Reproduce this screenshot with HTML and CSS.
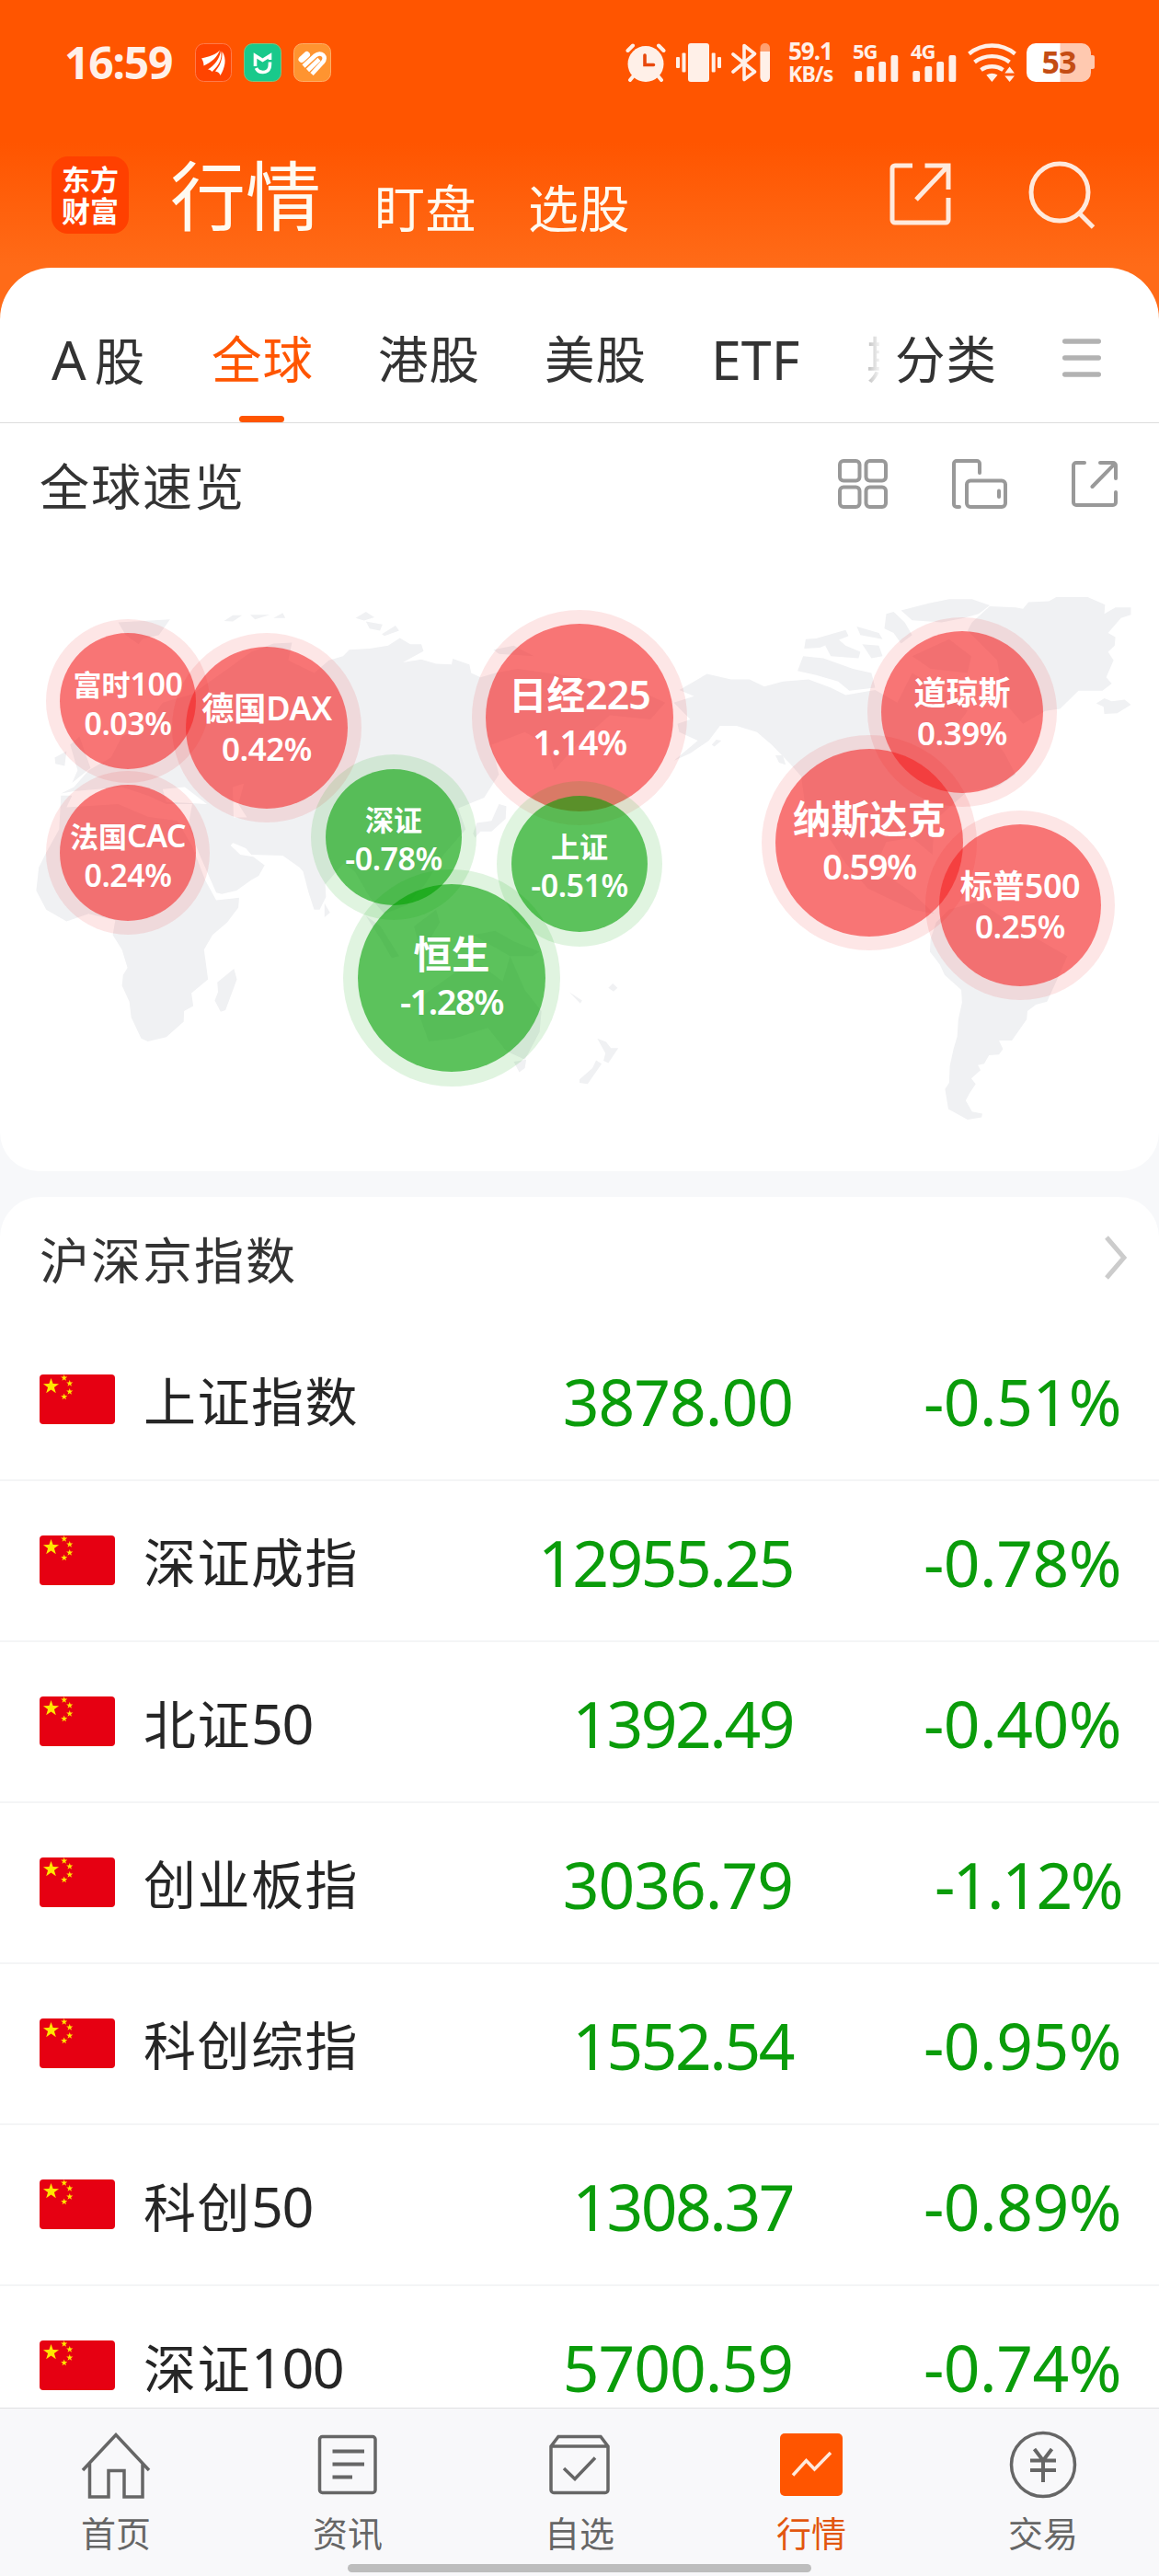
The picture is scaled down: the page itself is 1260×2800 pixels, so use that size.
FILE: index.html
```
<!DOCTYPE html>
<html lang="zh-CN">
<head>
	<meta charset="UTF-8">
	<meta name="viewport" content="width=device-width, initial-scale=1.0">
	<title>行情 - 全球</title>
	<link rel="stylesheet" href="styles.css">
</head>
<body>
	<svg class="defs" width="0" height="0">
		<symbol id="star" viewBox="-10 -10 20 20">
			<path d="M0-10 2.4-3.2 9.5-3.1 3.8 1.2 5.9 8.1 0 4-5.9 8.1-3.8 1.2-9.5-3.1-2.4-3.2z"/>
		</symbol>
		<symbol id="flag" viewBox="0 0 82 54">
			<rect width="82" height="54" rx="4" fill="#e60012"/>
			<g fill="#ffe600">
				<use href="#star" x="3.500" y="4" width="18" height="18"/>
				<use href="#star" x="23" y="0" width="7.500" height="7.500"/>
				<use href="#star" x="29" y="6" width="7.500" height="7.500"/>
				<use href="#star" x="29" y="15" width="7.500" height="7.500"/>
				<use href="#star" x="23" y="20.500" width="7.500" height="7.500"/>
			</g>
		</symbol>
	</svg>

	<header class="header">
		<div class="status-bar">
			<span class="clock">16:59</span>
			<div class="app-icons">
				<svg width="40" height="42" viewBox="0 0 40 42">
					<rect x=".5" y=".5" width="39" height="41" rx="9" fill="#ff4400" stroke="#ff7a4a"/>
					<g fill="#fff">
						<path d="M7 16.500C15 14.500 22 13 27 7.500 24 15 19 20 9.500 24.500 9.500 21 8.500 18.500 7 16.500z"/>
						<path d="M14 28.500C21 24 27 17 28 8 30 17 26 24 18.500 31 17.500 29.500 16 28.500 14 28.500z"/>
						<path d="M22 30.500C27 25 30 18 29.500 9 35 17 32.500 27 27.500 35 26.500 32 24.500 31 22 30.500z"/>
					</g>
				</svg>
				<svg width="41" height="42" viewBox="0 0 41 42">
					<rect x=".5" y=".5" width="40" height="41" rx="9" fill="#19c98b" stroke="#7fc27a"/>
					<g fill="none" stroke="#fff" stroke-width="3.600">
						<path d="M12.500 25V13.500L20.500 18.500 28.500 13.500V18"/>
						<path d="M13.500 27C16 33 26 33 28 26.500 28.500 24 28.500 22 28.500 20.500"/>
					</g>
				</svg>
				<svg width="41" height="42" viewBox="0 0 41 42">
					<rect x=".5" y=".5" width="40" height="41" rx="9" fill="#ff9430" stroke="#ffad66"/>
					<g fill="none" stroke="#fff" stroke-width="4.600">
						<path d="M9 17.500 14.500 12.500" stroke-width="7" stroke-linecap="round"/>
						<path d="M11 25 23.500 13.500C30 8 37.500 15 31.500 21L20 33.500"/>
						<path d="M15.500 29.500 28 17.500"/>
					</g>
				</svg>
			</div>
			<div class="status-icons">
				<svg width="44" height="42" viewBox="0 0 44 42" class="mr11">
					<g stroke="#fff0e8" stroke-width="4" stroke-linecap="round">
						<path d="M2.500 8 8 2.500M41.500 8 36 2.500M10 34 5 40M34 34 39 40"/>
					</g>
					<circle cx="22" cy="22.500" r="19.500" fill="#fff0e8"/>
					<path d="M21 13V23.500H30.500" fill="none" stroke="#e8480c" stroke-width="3.600" stroke-linecap="round"/>
				</svg>
				<svg width="49" height="42" viewBox="0 0 49 42" fill="#fff0e8" class="mr11">
					<rect x="13" width="23" height="42" rx="3"/>
					<rect x="6.500" y="10.500" width="4" height="21" rx="1"/>
					<rect y="15" width="4" height="12" rx="1"/>
					<rect x="38.700" y="10.500" width="4" height="21" rx="1"/>
					<rect x="45" y="15" width="4" height="12" rx="1"/>
				</svg>
				<svg width="42" height="42" viewBox="0 0 42 42" class="mr20">
					<path d="M2 12 25.500 31 14 39.500V2.500L25.500 11.500 2 31" fill="none" stroke="#fff0e8" stroke-width="3.600" stroke-linecap="round" stroke-linejoin="round"/>
					<rect x="31.500" width="10.500" height="42" rx="5" fill="#ffa070"/>
					<path d="M31.500 9H42V37A5 5 0 0 1 31.500 37z" fill="#fff0e8"/>
				</svg>
				<div class="net-speed"><span>59.1</span><span class="unit">KB/s</span></div>
				<svg width="50" height="42" viewBox="0 0 50 42" class="signal mr13">
					<text x="0" y="17">5G</text>
					<rect x="2.300" y="30" width="7.800" height="12" rx="2"/>
					<rect x="15.400" y="25" width="7.800" height="17" rx="2"/>
					<rect x="28.300" y="20" width="7.800" height="22" rx="2"/>
					<rect x="41.500" y="13" width="7.800" height="29" rx="2"/>
				</svg>
				<svg width="50" height="42" viewBox="0 0 50 42" class="signal mr12">
					<text x="0" y="17">4G</text>
					<rect x="2.300" y="30" width="7.800" height="12" rx="2"/>
					<rect x="15.400" y="25" width="7.800" height="17" rx="2"/>
					<rect x="28.300" y="20" width="7.800" height="22" rx="2"/>
					<rect x="41.500" y="13" width="7.800" height="29" rx="2"/>
				</svg>
				<svg width="53" height="42" viewBox="0 0 53 42" class="mr11">
					<g fill="none" stroke="#fff0e8" stroke-width="4.400">
						<path d="M1.500 11.500C16-.5 37-.5 51.500 11.500M7.500 20.500C18.500 12 34.500 12 45.500 20.500M14.500 29C21.500 24 31.500 24 38.500 29"/>
					</g>
					<path d="M20.300 34.500Q26.400 31 32.500 34.500L26.400 42zM40.300 32.500 45.600 25.500 50.900 32.500zM40.300 35.500H50.900L45.600 42z" fill="#fff0e8"/>
				</svg>
				<svg width="74" height="42" viewBox="0 0 74 42" class="battery">
					<rect x="60" y="13" width="14" height="15" rx="2" fill="#ffc9b0"/>
					<path d="M36 0H60A10 10 0 0 1 70 10V32A10 10 0 0 1 60 42H36z" fill="#ffc9b0"/>
					<path d="M36.500 0H10A10 10 0 0 0 0 10V32A10 10 0 0 0 10 42H36.500z" fill="#fff"/>
					<text x="35" y="33" text-anchor="middle">53</text>
				</svg>
			</div>
		</div>

		<div class="nav">
			<div class="logo"><span>东方</span><span>财富</span></div>
			<h1>行情</h1>
			<a class="nav-link">盯盘</a>
			<a class="nav-link">选股</a>
			<div class="nav-icons">
				<svg width="68" height="68" viewBox="0 0 68 68" fill="none" stroke="#ffe9dc" stroke-width="5">
					<path d="M25 3H6A3 3 0 0 0 3 6V62A3 3 0 0 0 6 65H61A3 3 0 0 0 64 62V38"/>
					<path d="M38.500 3H64V29M63 4 29 40"/>
				</svg>
				<svg class="search" width="74" height="74" viewBox="0 0 74 74" fill="none" stroke="#ffe9dc" stroke-width="5">
					<circle cx="34" cy="34" r="31"/>
					<path d="M55 56.500 70.500 72"/>
				</svg>
			</div>
		</div>
	</header>

	<main class="content">
		<section class="card overview">
			<div class="tabs">
				<a class="tab"><span class="en">A</span> 股</a>
				<a class="tab active">全球</a>
				<a class="tab">港股</a>
				<a class="tab">美股</a>
				<a class="tab etf"><span class="en">ETF</span></a>
				<a class="tab cut">期</a>
				<a class="tab">分类</a>
				<svg class="menu" width="42" height="44" viewBox="0 0 42 44" stroke="#b2b2b2" stroke-width="5.400" stroke-linecap="round">
					<path d="M2.700 4H39.300M2.700 22H39.300M2.700 40H39.300"/>
				</svg>
			</div>

			<div class="section-title">
				<h2>全球速览</h2>
				<div class="tools">
					<svg width="54" height="54" viewBox="0 0 54 54" fill="none" stroke="#999" stroke-width="4">
						<rect x="2" y="2" width="21.500" height="21.500" rx="4"/>
						<rect x="30.500" y="2" width="21.500" height="21.500" rx="4"/>
						<rect x="2" y="30.500" width="21.500" height="21.500" rx="4"/>
						<rect x="30.500" y="30.500" width="21.500" height="21.500" rx="4"/>
					</svg>
					<svg width="60" height="54" viewBox="0 0 60 54" fill="none" stroke="#999" stroke-width="4" stroke-linecap="round">
						<path d="M8 52H5A3 3 0 0 1 2 49V5A3 3 0 0 1 5 2H27A3 3 0 0 1 30 5V15"/>
						<rect x="16" y="23.500" width="42" height="28.500" rx="4"/>
						<path d="M51 34.500V41"/>
					</svg>
					<svg width="50" height="52" viewBox="0 0 50 52" fill="none" stroke="#999" stroke-width="4" stroke-linecap="round" stroke-linejoin="round">
						<path d="M14 3H5A3 3 0 0 0 2 6V46A3 3 0 0 0 5 49H45A3 3 0 0 0 48 46V35"/>
						<path d="M31 3H45A3 3 0 0 1 48 6V20M47 4 22.500 29"/>
					</svg>
				</div>
			</div>

			<div class="map">
				<svg class="world" viewBox="0 0 1260 682" fill="#f0f1f3">
					<g transform="translate(0 -10) scale(.4018 .4592)">
						<path d="M928 290 945 275 1000 272 1050 265 1082 247 1110 262 1140 262 1146 278 1090 305 1140 298 1180 308 1222 310 1225 296 1270 310 1275 330 1300 340 1340 330 1400 320 1568 340 1700 360 1800 400 1760 440 1650 430 1560 500 1500 560 1480 500 1420 470 1330 500 1350 570 1310 625 1240 650 1260 700 1200 760 1150 830 1100 880 1040 900 1000 860 960 800 930 780 880 830 882 860 865 890 850 890 835 850 820 800 810 790 765 762 680 760 665 745 630 732 624 738 650 760 685 765 716 785 700 810 680 820 640 845 600 853 585 850 540 760 510 690 520 640 450 640 400 620 330 600 200 610 165 615 200 600 240 560 300 530 330 480 400 450 440 400 520 380 600 330 680 280 740 260 790 258 780 300 850 330 890 300z"/>
						<path d="M165 620 195 620 180 648 320 640 400 670 480 680 520 740 555 820 585 868 647 862 645 885 615 920 575 950 552 985 563 1055 518 1088 523 1118 498 1130 497 1155 450 1192 400 1202 382 1195 355 1145 350 1108 330 1070 333 1045 345 1028 330 985 305 950 312 915 240 900 180 918 125 890 98 845 105 790 125 755 160 700z"/>
						<path d="M633 1030 641 1055 610 1128 597 1132 581 1105 590 1085 588 1062z"/>
						<path d="M320 210 460 203 430 240 385 250 375 262 340 240zM606 207 630 193 655 193 630 208zM677 192 730 192 690 203zM740 200 765 188 772 200zM962 200 990 185 1013 198 985 206zM990 208 1035 215 1028 230 1000 225zM1033 238 1070 218 1080 230 1040 242z"/>
						<path d="M148 530 180 515 175 550 150 545zM190 500 215 480 235 530 245 555 195 590 210 560zM878 875 893 897 878 908z"/>
						<path d="M1280 710 1290 685 1330 680 1350 640 1370 645 1368 675 1330 705 1300 705 1285 720zM1335 275 1390 265 1445 290 1350 285z"/>
						<path d="M990 905 1030 930 1080 1000 1060 1005 1030 960zM1120 930 1180 890 1190 920 1160 965 1130 960zM1280 950 1340 940 1390 965 1460 990 1440 1000 1380 1000z"/>
						<path d="M1130 1130 1150 1090 1230 1040 1300 1020 1360 1060 1380 1000 1420 1080 1465 1130 1460 1180 1420 1245 1370 1225 1320 1170 1230 1195 1160 1202zM1390 1250 1424 1245 1420 1265 1405 1275zM1540 1085 1575 1105 1570 1112z"/>
						<path d="M630 600 660 592 645 640 668 672 632 672z" fill="#fff"/>
						<path d="M440 605 500 600 560 640 450 635z" fill="#fff"/>
					</g>
					<g transform="translate(630 -10) scale(.4018 .4592)">
						<path d="M270 370 345 332 410 345 460 345 500 362 550 350 620 345 680 365 720 382 800 370 860 400 900 330 1000 380 1050 420 1000 480 1060 500 1100 460 1150 520 1180 570 1130 600 1050 610 960 680 955 760 900 720 830 730 800 790 850 820 900 850 960 900 900 890 780 840 720 780 660 700 610 640 600 575 570 545 520 500 480 470 425 455 380 455 350 490 300 520 255 538 320 490 270 470 265 450 300 440 255 400 310 385z"/>
						<path d="M612 250 640 248 720 228 728 242 650 270 608 272zM590 325 605 290 660 295 740 320 790 330 800 365 730 372 700 350 640 335zM665 265 700 250 720 265 760 280 755 295 680 290zM750 220 810 235 820 250 760 240zM765 262 810 265 820 290 790 295zM830 190 850 185 880 210 900 240 870 260 850 235 825 225z"/>
						<path d="M870 182 945 165 1000 155 1062 155 1110 170 1080 190 1040 200 980 210 900 205z"/>
						<path d="M1062 210 1110 172 1180 175 1200 178 1215 162 1270 160 1290 150 1375 150 1422 168 1420 190 1450 175 1492 175 1492 192 1465 200 1430 235 1450 245 1448 265 1430 280 1445 300 1425 340 1440 355 1415 372 1350 372 1300 415 1260 420 1200 450 1150 400 1130 300 1050 230z"/>
						<path d="M1398 402 1420 390 1440 397 1475 393 1492 405 1455 425 1420 427 1418 410zM900 290 1000 250 1060 290 1050 330 950 320z"/>
						<path d="M965 920 1000 890 1080 870 1180 930 1260 970 1320 1000 1290 1060 1265 1108 1235 1115 1212 1130 1210 1150 1170 1200 1135 1200 1146 1220 1135 1233 1108 1235 1095 1255 1078 1258 1085 1270 1060 1290 1072 1303 1055 1325 1045 1342 1062 1368 1090 1373 1088 1382 1050 1387 998 1362 989 1315 1000 1300 1002 1260 1012 1220 1022 1190 1025 1150 1035 1110 1033 1080 988 1045 975 1020 948 990 950 960z"/>
						<path d="M48 1195 72 1203 85 1218 105 1218 78 1253 65 1248 70 1230zM45 1247 60 1255 22 1303 0 1300 0 1292 35 1265zM78 1075 90 1065 103 1075 92 1084zM358 500 370 488 384 490 365 504zM530 525 550 525 558 547 540 542z"/>
					</g>
				</svg>
				<div class="bubble small up ftse"><b>富时<i>100</i></b><span>0.03%</span></div>
				<div class="bubble medium up dax"><b>德国<i>DAX</i></b><span>0.42%</span></div>
				<div class="bubble small up cac"><b>法国<i>CAC</i></b><span>0.24%</span></div>
				<div class="bubble large up nikkei"><b>日经<i>225</i></b><span>1.14%</span></div>
				<div class="bubble small down sz"><b>深证</b><span>-0.78%</span></div>
				<div class="bubble small down sh"><b>上证</b><span>-0.51%</span></div>
				<div class="bubble large down hsi"><b>恒生</b><span>-1.28%</span></div>
				<div class="bubble medium up dow"><b>道琼斯</b><span>0.39%</span></div>
				<div class="bubble large up nasdaq"><b>纳斯达克</b><span>0.59%</span></div>
				<div class="bubble medium up sp"><b>标普<i>500</i></b><span>0.25%</span></div>
			</div>
		</section>

		<section class="card quotes">
			<div class="quotes-title">
				<h2>沪深京指数</h2>
				<svg width="24" height="50" viewBox="0 0 24 50" fill="none" stroke="#ccc" stroke-width="5">
					<path d="M2 3 21 25 2 47"/>
				</svg>
			</div>
			<div class="row"><svg class="flag"><use href="#flag"/></svg><span class="name">上证指数</span><span class="price">3878.00</span><span class="change">-0.51%</span></div>
			<div class="row"><svg class="flag"><use href="#flag"/></svg><span class="name">深证成指</span><span class="price tight">12955.25</span><span class="change">-0.78%</span></div>
			<div class="row"><svg class="flag"><use href="#flag"/></svg><span class="name">北证<i>50</i></span><span class="price tight">1392.49</span><span class="change">-0.40%</span></div>
			<div class="row"><svg class="flag"><use href="#flag"/></svg><span class="name">创业板指</span><span class="price">3036.79</span><span class="change tight">-1.12%</span></div>
			<div class="row"><svg class="flag"><use href="#flag"/></svg><span class="name">科创综指</span><span class="price tight">1552.54</span><span class="change">-0.95%</span></div>
			<div class="row"><svg class="flag"><use href="#flag"/></svg><span class="name">科创<i>50</i></span><span class="price tight">1308.37</span><span class="change">-0.89%</span></div>
			<div class="row"><svg class="flag"><use href="#flag"/></svg><span class="name">深证<i>100</i></span><span class="price">5700.59</span><span class="change">-0.74%</span></div>
		</section>
	</main>

	<footer class="tab-bar">
		<a class="tab-item">
			<svg viewBox="0 0 80 76">
				<path d="M4 43 40 4.500 76 43M11.500 36V72H32V43.500H49V72H69V36"/>
			</svg>
			<span>首页</span>
		</a>
		<a class="tab-item">
			<svg viewBox="0 0 80 76">
				<rect x="9.500" y="6.500" width="60.500" height="61" rx="3"/>
				<path d="M23.500 22.500H58M23.500 36.500H58M23.500 50.500H45" stroke-width="4"/>
			</svg>
			<span>资讯</span>
		</a>
		<a class="tab-item">
			<svg viewBox="0 0 80 76">
				<path d="M9 17 17 6.500H63L71 17V64.500A3 3 0 0 1 68 67.500H12A3 3 0 0 1 9 64.500zM9 17H71M23 41 35 52.500 57 29.500"/>
			</svg>
			<span>自选</span>
		</a>
		<a class="tab-item active">
			<svg viewBox="0 0 80 76">
				<rect x="6" y="3" width="68" height="68" rx="5" fill="#ff5500" stroke="none"/>
				<path d="M20 48.500 34.500 32.500 43.500 42 61 24" stroke="#ffe9dc"/>
			</svg>
			<span>行情</span>
		</a>
		<a class="tab-item">
			<svg viewBox="0 0 80 76">
				<circle cx="40" cy="37" r="34.500"/>
				<path d="M30.500 20 40 32.500 49.500 20M26 32.500H54M26 43H54M40 32V56" stroke-width="4"/>
			</svg>
			<span>交易</span>
		</a>
		<div class="home-bar"></div>
	</footer>
</body>
</html>
```

FILE: styles.css
```
html, body{
	margin:0;
	padding:0;
}
*{
	box-sizing:border-box;
}
body{
	display:flex;
	flex-direction:column;
	width:1260px;
	height:2800px;
	overflow:hidden;
	background:linear-gradient(#ff5500 155px, #ff6b18 290px, #ff6b18 400px, #f7f8fa 400px);
	font-family:"Noto Sans", "Noto Sans CJK SC", sans-serif;
	color:#333;
}
h1, h2{
	margin:0;
	font-weight:400;
}
i{
	font-style:normal;
}
svg{
	display:block;
	flex:none;
}
.defs{
	position:absolute;
}

/* header */
.header{
	flex:none;
	height:291px;
}
.status-bar{
	display:flex;
	align-items:center;
	height:136px;
	padding:0 70px 0 70px;
}
.clock{
	width:142px;
	font-size:48px;
	font-weight:700;
	line-height:66px;
	letter-spacing:-1.200px;
	color:#fff0e8;
	white-space:nowrap;
}
.app-icons{
	display:flex;
	gap:13px;
}
.status-icons{
	display:flex;
	align-items:center;
	margin-left:auto;
}
.mr11{
	margin-right:11px;
}
.mr12{
	margin-right:12px;
}
.mr13{
	margin-right:13px;
}
.mr20{
	margin-right:20px;
}
.net-speed{
	display:flex;
	flex-direction:column;
	width:50px;
	margin-right:20px;
	font-size:26px;
	font-weight:700;
	line-height:25px;
	letter-spacing:-1px;
	color:#fff0e8;
	white-space:nowrap;
}
.unit{
	font-size:23px;
	letter-spacing:-.8px;
}
.signal{
	overflow:visible;
	fill:#fff0e8;
	font-size:22px;
	font-weight:700;
	letter-spacing:-1px;
}
.battery{
	overflow:visible;
}
.battery text{
	fill:#c44d14;
	font-size:34px;
	font-weight:700;
	letter-spacing:-1px;
}
.nav{
	display:flex;
	align-items:flex-start;
	padding:34px 68px 0 56px;
}
.logo{
	display:flex;
	flex-direction:column;
	align-items:center;
	justify-content:center;
	width:84px;
	height:84px;
	border-radius:18px;
	background-color:#ff4000;
	color:#fff;
	font-size:31px;
	font-weight:700;
	line-height:34px;
}
.nav h1{
	width:166px;
	margin-left:45px;
	font-size:82px;
	line-height:84px;
	color:#fffaf0;
	white-space:nowrap;
}
.nav-link{
	width:112px;
	margin:28px 0 0 56px;
	font-size:55px;
	line-height:56px;
	letter-spacing:.5px;
	color:#fffaf0;
}
.nav-link + .nav-link{
	margin-left:55px;
}
.nav-icons{
	display:flex;
	gap:83px;
	margin:7px 0 0 auto;
}
.search{
	margin-top:-2px;
}

/* cards */
.content{
	flex:1 1 1px;
	overflow:hidden;
}
.card{
	background-color:#fff;
}
.overview{
	height:982px;
	border-radius:56px 56px 42px 42px;
}
.tabs{
	display:flex;
	align-items:center;
	height:169px;
	padding:0 63px 0 56px;
	border-bottom:1px solid #ddd;
}
.tab{
	position:relative;
	height:168px;
	margin-right:70px;
	font-size:54.500px;
	line-height:199px;
	letter-spacing:1px;
	white-space:nowrap;
}
.tab .en{
	font-size:59px;
	letter-spacing:0;
}
.tab:first-child{
	width:104px;
	word-spacing:-6px;
}
.tab.active{
	color:#ff5500;
}
.tab.active::after{
	content:'';
	position:absolute;
	left:30px;
	bottom:0;
	width:49px;
	height:7px;
	border-radius:4px;
	background-color:#ff5500;
}
.tab.etf{
	width:96px;
	margin-right:73px;
}
.tab.cut{
	width:14px;
	margin-right:17px;
	overflow:hidden;
	color:transparent;
	background:linear-gradient(90deg, #bbb, #f4f4f4);
	-webkit-background-clip:text;
	background-clip:text;
}
.menu{
	margin:28px 0 0 auto;
}
.section-title{
	display:flex;
	align-items:center;
	justify-content:space-between;
	height:130px;
	padding:2px 45px 0 43px;
}
h2{
	padding-top:5px;
	font-size:54px;
	line-height:70px;
	letter-spacing:2px;
}
.tools{
	display:flex;
	align-items:center;
	gap:70px;
}

/* world map */
.map{
	position:relative;
	height:682px;
}
.world{
	width:1260px;
	height:682px;
}
.bubble{
	position:absolute;
	display:flex;
	flex-direction:column;
	align-items:center;
	justify-content:center;
	border-radius:50%;
	color:#fff;
	white-space:nowrap;
}
.bubble b, .bubble span{
	font-weight:600;
}
.bubble.up{
	background-color:rgba(243, 32, 32, .62);
	box-shadow:0 0 0 15px rgba(238, 28, 28, .11);
}
.bubble.down{
	background-color:rgba(0, 160, 0, .64);
	box-shadow:0 0 0 16px rgba(0, 163, 0, .12);
}
.small{
	width:148px;
	height:148px;
	padding-top:4px;
	font-size:34px;
	line-height:42px;
	letter-spacing:-.5px;
}
.small b{
	font-size:31px;
	letter-spacing:0;
}
.small i{
	font-size:34px;
	letter-spacing:-.5px;
}
.medium{
	width:176px;
	height:176px;
	padding-top:2px;
	font-size:35px;
	line-height:44px;
	letter-spacing:-.5px;
}
.medium b{
	letter-spacing:0;
}
.medium i{
	font-size:36px;
	letter-spacing:-.5px;
}
.large{
	width:204px;
	height:204px;
	font-size:38px;
	line-height:51px;
	letter-spacing:-1.500px;
}
.large b{
	font-size:41.500px;
	letter-spacing:0;
}
.large i{
	font-size:43px;
	letter-spacing:-1px;
}
.ftse{
	left:65px;
	top:98px;
}
.dax{
	left:202px;
	top:113px;
}
.cac{
	left:65px;
	top:263px;
}
.nikkei{
	left:528px;
	top:88px;
}
.sz{
	left:354px;
	top:246px;
}
.sh{
	left:556px;
	top:275px;
}
.hsi{
	left:389px;
	top:371px;
}
.dow{
	left:958px;
	top:96px;
}
.nasdaq{
	left:843px;
	top:224px;
}
.sp{
	left:1021px;
	top:306px;
}

/* quotes */
.quotes{
	margin-top:28px;
	border-radius:44px 44px 0 0;
}
.quotes-title{
	display:flex;
	align-items:center;
	justify-content:space-between;
	height:134px;
	padding:0 35px 2px 43px;
}
.row{
	display:grid;
	grid-template-columns:113px 340px 366px 357px;
	align-items:center;
	height:175px;
	padding-left:43px;
	border-bottom:2px solid #f4f5f6;
	color:#262626;
}
.flag{
	width:82px;
	height:54px;
	margin-bottom:1px;
}
.name{
	padding-top:3px;
	font-size:57px;
	letter-spacing:1.500px;
	line-height:80px;
}
.name i{
	font-size:61px;
	letter-spacing:-1.500px;
}
.price, .change{
	padding-top:3px;
	font-size:69.500px;
	line-height:80px;
	letter-spacing:-1px;
	text-align:right;
	color:#0a9c0a;
}
.change{
	letter-spacing:-.5px;
}
.tight{
	letter-spacing:-2.500px;
}

/* bottom bar */
.tab-bar{
	position:relative;
	flex:none;
	display:flex;
	height:183px;
	border-top:1px solid #e0e0e2;
	background-color:#f8f8fa;
}
.tab-item{
	display:flex;
	flex-direction:column;
	align-items:center;
	width:252px;
	padding-top:24px;
	font-size:38px;
	line-height:50px;
	color:#666;
}
.tab-item svg{
	width:80px;
	height:76px;
	margin-bottom:10px;
	fill:none;
	stroke:#666;
	stroke-width:3.500;
}
.tab-item.active{
	color:#e2560f;
}
.home-bar{
	position:absolute;
	left:378px;
	bottom:4px;
	width:504px;
	height:9px;
	border-radius:5px;
	background-color:#bdbdbd;
}
```
